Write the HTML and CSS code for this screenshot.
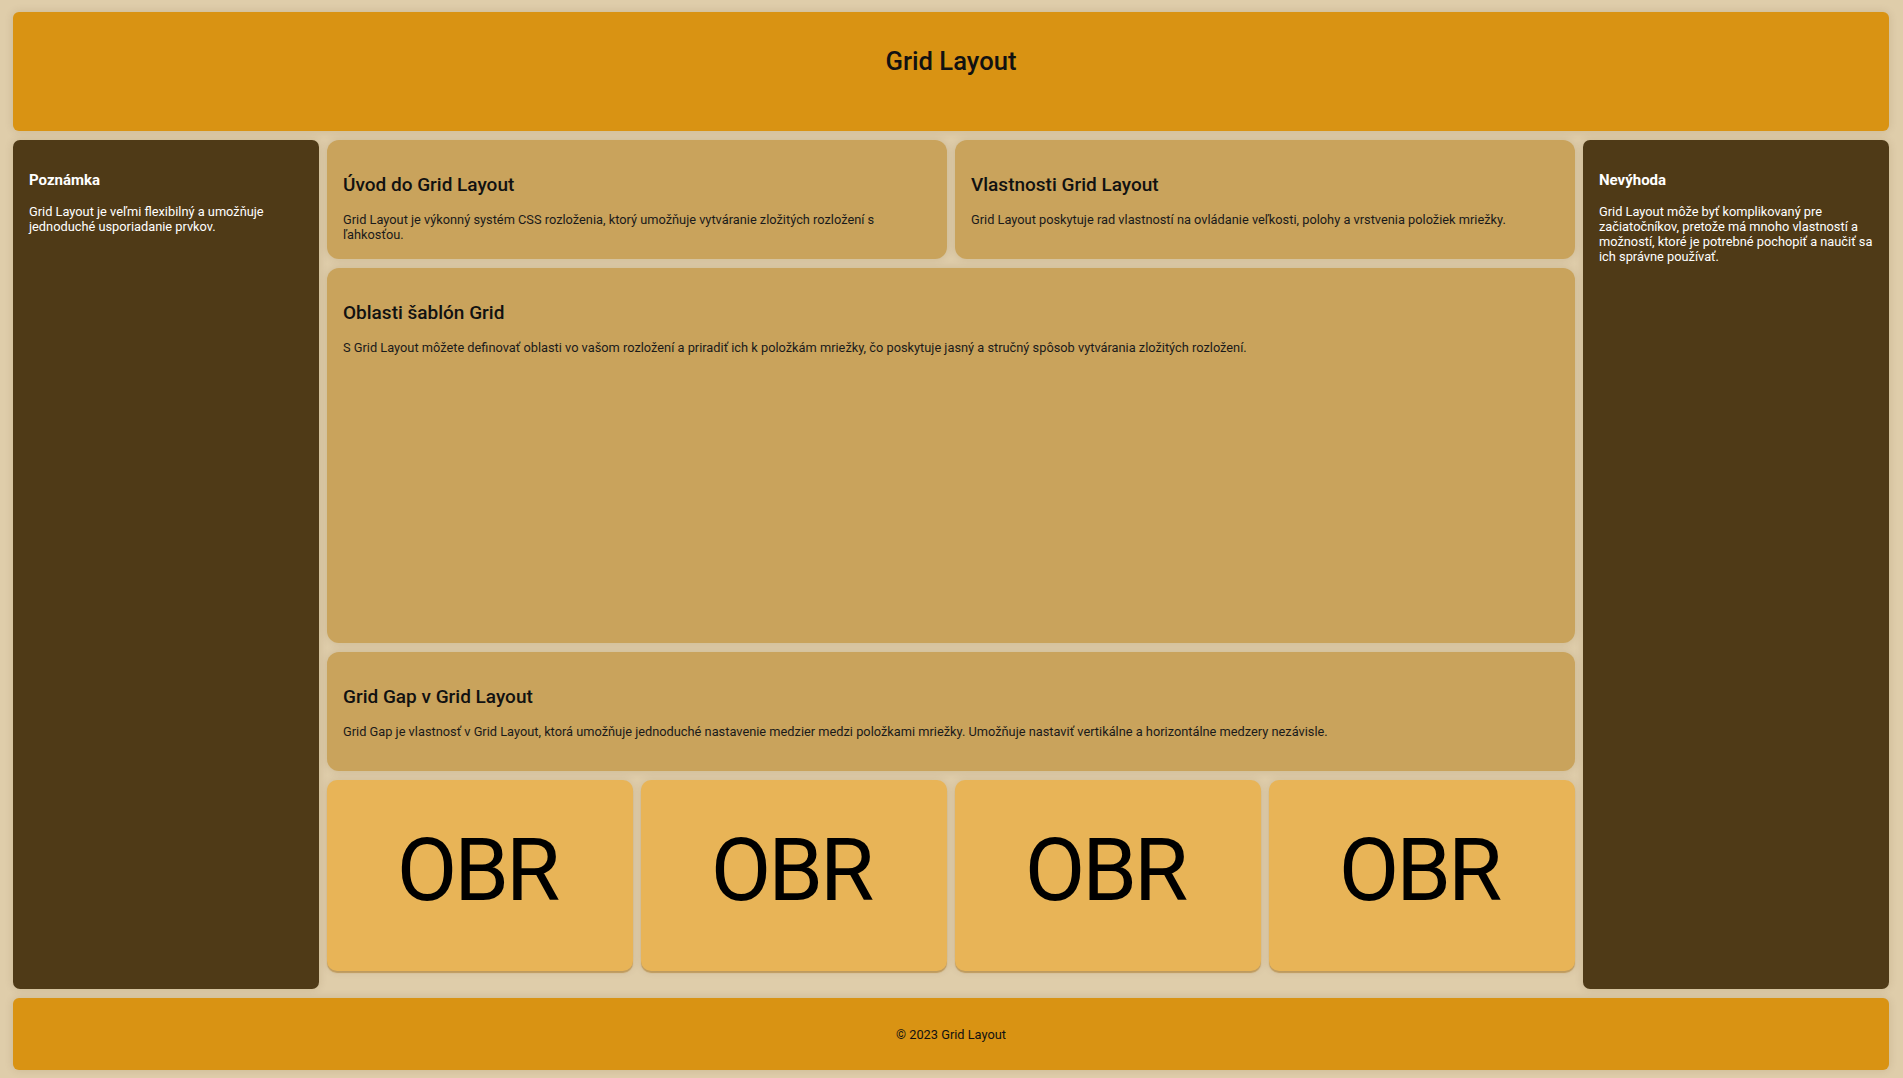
FILE: index.html
```html
<!DOCTYPE html>
<html lang="sk">
<head>
<meta charset="utf-8">
<title>Grid Layout</title>
<link rel="stylesheet" href="styles.css">
</head>
<body>
<div class="page">
  <header class="header"><h1>Grid Layout</h1></header>

  <aside class="sidebar sidebar-left">
    <h3>Poznámka</h3>
    <p>Grid Layout je veľmi flexibilný a umožňuje jednoduché usporiadanie prvkov.</p>
  </aside>

  <section class="card card-intro">
    <h3>Úvod do Grid Layout</h3>
    <p>Grid Layout je výkonný systém CSS rozloženia, ktorý umožňuje vytváranie zložitých rozložení s ľahkosťou.</p>
  </section>

  <section class="card card-props">
    <h3>Vlastnosti Grid Layout</h3>
    <p>Grid Layout poskytuje rad vlastností na ovládanie veľkosti, polohy a vrstvenia položiek mriežky.</p>
  </section>

  <aside class="sidebar sidebar-right">
    <h3>Nevýhoda</h3>
    <p>Grid Layout môže byť komplikovaný pre začiatočníkov, pretože má mnoho vlastností a možností, ktoré je potrebné pochopiť a naučiť sa ich správne používať.</p>
  </aside>

  <section class="card card-areas">
    <h3>Oblasti šablón Grid</h3>
    <p>S Grid Layout môžete definovať oblasti vo vašom rozložení a priradiť ich k položkám mriežky, čo poskytuje jasný a stručný spôsob vytvárania zložitých rozložení.</p>
  </section>

  <section class="card card-gap">
    <h3>Grid Gap v Grid Layout</h3>
    <p>Grid Gap je vlastnosť v Grid Layout, ktorá umožňuje jednoduché nastavenie medzier medzi položkami mriežky. Umožňuje nastaviť vertikálne a horizontálne medzery nezávisle.</p>
  </section>

  <div class="obr obr-1">OBR</div>
  <div class="obr obr-2">OBR</div>
  <div class="obr obr-3">OBR</div>
  <div class="obr obr-4">OBR</div>

  <footer class="footer">© 2023 Grid Layout</footer>
</div>
</body>
</html>
```

FILE: styles.css
```css
html, body {
  margin: 0;
  padding: 0;
}

body {
  background: #dfcdaa;
  font-family: Roboto, "Liberation Sans", sans-serif;
  color: #111;
}

.page {
  display: grid;
  grid-template-columns: repeat(6, 1fr);
  grid-template-rows: 119px 119px 375px 119px 209px 72px;
  grid-template-areas:
    "head head head head head head"
    "left intro intro props props right"
    "left areas areas areas areas right"
    "left gap gap gap gap right"
    "left o1 o2 o3 o4 right"
    "foot foot foot foot foot foot";
  column-gap: 8px;
  row-gap: 9px;
  padding: 12px 14px 8px 13px;
}

.header {
  grid-area: head;
  background: #d99313;
  border-radius: 6px;
  box-shadow: 0 0 8px rgba(90, 60, 10, 0.15);
  text-align: center;
  padding-top: 34px;
}

.header h1 {
  margin: 0;
  font-size: 25.6px;
  font-weight: 500;
  color: #111;
}

.sidebar {
  background: #4f3a17;
  color: #fff;
  border-radius: 7px;
  padding: 16px;
  box-shadow: 0 0 8px rgba(90, 60, 10, 0.15);
}

.sidebar-left { grid-area: left; }
.sidebar-right { grid-area: right; }

.sidebar h3 {
  margin: 15px 0 15px;
  font-size: 15px;
  font-weight: 700;
}

.sidebar p {
  margin: 0;
  font-size: 12.8px;
  line-height: 15px;
}

.card {
  background: #c9a35c;
  border-radius: 12px;
  padding: 16px;
  box-shadow: 0 0 8px rgba(90, 60, 10, 0.15);
}

.card h3 {
  margin: 17px 0 16px;
  font-size: 19px;
  font-weight: 500;
  color: #111;
}

.card p {
  margin: 0;
  font-size: 12.8px;
  line-height: 15px;
  color: #1a1a1a;
}

.card-intro { grid-area: intro; }
.card-props { grid-area: props; }
.card-areas { grid-area: areas; }
.card-gap { grid-area: gap; }

.obr {
  align-self: start;
  height: 191px;
  background: #e8b457;
  border-radius: 10px;
  box-shadow: 0 2px 1px rgba(170, 120, 40, 0.55), 0 0 8px rgba(90, 60, 10, 0.12);
  display: flex;
  align-items: center;
  justify-content: center;
  font-family: Roboto, sans-serif;
  font-size: 88px;
  letter-spacing: -3px;
  color: #000;
  padding: 0 6px 12px 0;
  box-sizing: border-box;
}

.obr-1 { grid-area: o1; }
.obr-2 { grid-area: o2; }
.obr-3 { grid-area: o3; }
.obr-4 { grid-area: o4; }

.footer {
  grid-area: foot;
  background: #d99313;
  border-radius: 6px;
  box-shadow: 0 0 8px rgba(90, 60, 10, 0.15);
  display: flex;
  align-items: center;
  justify-content: center;
  font-size: 12.8px;
  color: #111;
}
```
